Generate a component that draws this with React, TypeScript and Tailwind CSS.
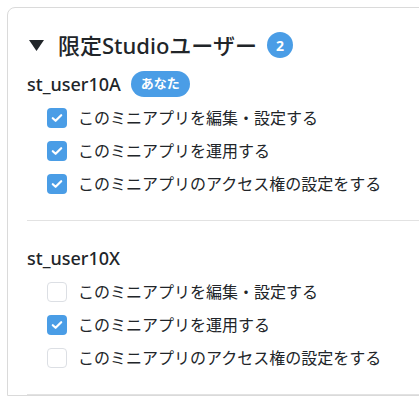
const FONT = "font-['Noto_Sans','Noto_Sans_CJK_JP',sans-serif]"

type Perm = { label: string; checked: boolean }

const users: { name: string; me: boolean; perms: Perm[] }[] = [
  {
    name: "st_user10A",
    me: true,
    perms: [
      { label: "このミニアプリを編集・設定する", checked: true },
      { label: "このミニアプリを運用する", checked: true },
      { label: "このミニアプリのアクセス権の設定をする", checked: true },
    ],
  },
  {
    name: "st_user10X",
    me: false,
    perms: [
      { label: "このミニアプリを編集・設定する", checked: false },
      { label: "このミニアプリを運用する", checked: true },
      { label: "このミニアプリのアクセス権の設定をする", checked: false },
    ],
  },
]

function Checkbox({ checked }: { checked: boolean }) {
  if (!checked) {
    return <span className="w-5 h-5 shrink-0 rounded-[4px] border border-[#dcdfe4] bg-white" />
  }
  return (
    <span className="w-5 h-5 shrink-0 rounded-[4px] bg-[#4a9de6] flex items-center justify-center">
      <svg width="12" height="10" viewBox="0 0 12 10" fill="none">
        <path d="M1.8 5.2 L4.6 7.8 L10.2 2.2" stroke="white" strokeWidth="2.2" strokeLinecap="round" strokeLinejoin="round" />
      </svg>
    </span>
  )
}

export default function App() {
  return (
    <div className={`w-[419px] h-[400px] overflow-hidden bg-white text-[#212529] ${FONT}`}>
      <div className="ml-[7px] mt-[7px] w-[440px] border border-[#dadada] rounded-tl-lg pl-[19px] pt-[21px]">
        <div className="flex items-center h-8">
          <svg width="15" height="11" viewBox="0 0 15 11" className="ml-[2px] mr-[14px]">
            <path d="M0 0 H15 L7.5 11 Z" fill="#212529" />
          </svg>
          <span className="text-[22px] font-medium leading-8">限定Studioユーザー</span>
          <span className="ml-[10px] w-[26px] h-[26px] rounded-full bg-[#4a9de6] text-white text-[14px] font-bold flex items-center justify-center">
            2
          </span>
        </div>

        {users.map((u, i) => (
          <div
            key={u.name}
            className={`border-b border-[#e2e2e2] pb-5 ${i === 0 ? "mt-[9px]" : "pt-[23px]"}`}
          >
            <div className="flex items-center h-7">
              <span className="text-[18px] font-medium leading-7">{u.name}</span>
              {u.me && (
                <span className="ml-[10px] h-[26px] px-[10px] rounded-full bg-[#4a9de6] text-white text-[13px] font-bold flex items-center">
                  あなた
                </span>
              )}
            </div>
            <div className="mt-[3px] pl-5">
              {u.perms.map((p) => (
                <label key={p.label} className="flex items-center h-[33px] gap-[11px]">
                  <Checkbox checked={p.checked} />
                  <span className="text-[16px] leading-6">{p.label}</span>
                </label>
              ))}
            </div>
          </div>
        ))}
      </div>
    </div>
  )
}
